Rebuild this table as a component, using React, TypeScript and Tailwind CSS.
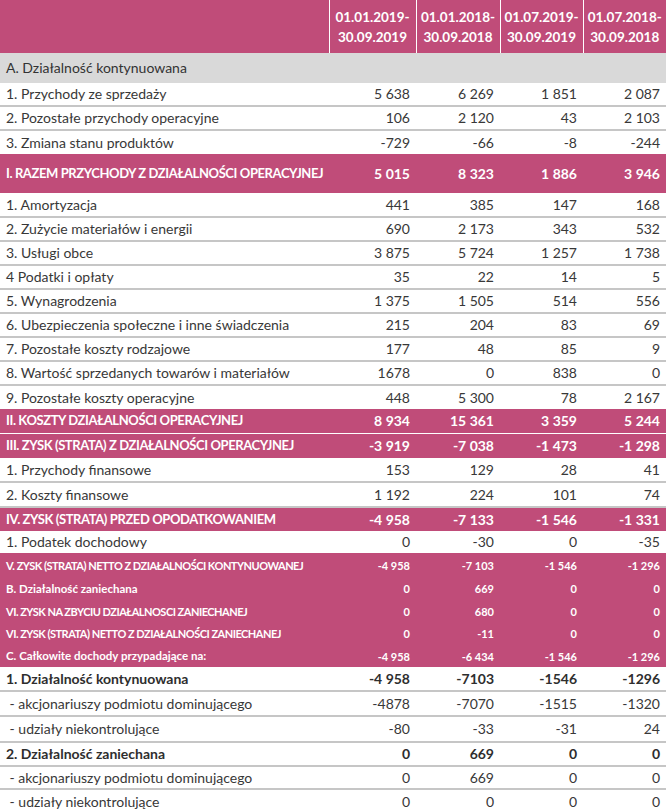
import React from 'react';

type Kind = 'section' | 'plain' | 'total' | 'small' | 'bold';

interface Row {
  label: string;
  vals: string[];
  kind: Kind;
  h: number;
  line?: boolean; // gray separator above
  white?: boolean; // thin white line above
  under?: boolean; // gray line under
}

const rows: Row[] = [
  { label: 'A. Działalność kontynuowana', vals: [], kind: 'section', h: 30 },
  { label: '1. Przychody ze sprzedaży', vals: ['5 638', '6 269', '1 851', '2 087'], kind: 'plain', h: 23 },
  { label: '2. Pozostałe przychody operacyjne', vals: ['106', '2 120', '43', '2 103'], kind: 'plain', h: 24, line: true },
  { label: '3. Zmiana stanu produktów', vals: ['-729', '-66', '-8', '-244'], kind: 'plain', h: 24, line: true },
  { label: 'I. RAZEM PRZYCHODY Z DZIAŁALNOŚCI OPERACYJNEJ', vals: ['5 015', '8 323', '1 886', '3 946'], kind: 'total', h: 39 },
  { label: '1. Amortyzacja', vals: ['441', '385', '147', '168'], kind: 'plain', h: 24 },
  { label: '2. Zużycie materiałów i energii', vals: ['690', '2 173', '343', '532'], kind: 'plain', h: 24, line: true },
  { label: '3. Usługi obce', vals: ['3 875', '5 724', '1 257', '1 738'], kind: 'plain', h: 24, line: true },
  { label: '4 Podatki i opłaty', vals: ['35', '22', '14', '5'], kind: 'plain', h: 24, line: true },
  { label: '5. Wynagrodzenia', vals: ['1 375', '1 505', '514', '556'], kind: 'plain', h: 24, line: true },
  { label: '6. Ubezpieczenia społeczne i inne świadczenia', vals: ['215', '204', '83', '69'], kind: 'plain', h: 24, line: true },
  { label: '7. Pozostałe koszty rodzajowe', vals: ['177', '48', '85', '9'], kind: 'plain', h: 24, line: true },
  { label: '8. Wartość sprzedanych towarów i materiałów', vals: ['1678', '0', '838', '0'], kind: 'plain', h: 24, line: true },
  { label: '9. Pozostałe koszty operacyjne', vals: ['448', '5 300', '78', '2 167'], kind: 'plain', h: 24, line: true },
  { label: 'II. KOSZTY DZIAŁALNOŚCI OPERACYJNEJ', vals: ['8 934', '15 361', '3 359', '5 244'], kind: 'total', h: 24 },
  { label: 'III. ZYSK (STRATA) Z DZIAŁALNOŚCI OPERACYJNEJ', vals: ['-3 919', '-7 038', '-1 473', '-1 298'], kind: 'total', h: 25, white: true },
  { label: '1. Przychody finansowe', vals: ['153', '129', '28', '41'], kind: 'plain', h: 24 },
  { label: '2. Koszty finansowe', vals: ['1 192', '224', '101', '74'], kind: 'plain', h: 25, line: true, under: true },
  { label: 'IV. ZYSK (STRATA) PRZED OPODATKOWANIEM', vals: ['-4 958', '-7 133', '-1 546', '-1 331'], kind: 'total', h: 24 },
  { label: '1. Podatek dochodowy', vals: ['0', '-30', '0', '-35'], kind: 'plain', h: 22 },
  { label: 'V. ZYSK (STRATA) NETTO Z DZIAŁALNOŚCI KONTYNUOWANEJ', vals: ['-4 958', '-7 103', '-1 546', '-1 296'], kind: 'small', h: 24 },
  { label: 'B. Działalność zaniechana', vals: ['0', '669', '0', '0'], kind: 'small', h: 23 },
  { label: 'VI. ZYSK NA ZBYCIU DZIAŁALNOSCI ZANIECHANEJ', vals: ['0', '680', '0', '0'], kind: 'small', h: 22 },
  { label: 'VI. ZYSK (STRATA) NETTO Z DZIAŁALNOŚCI ZANIECHANEJ', vals: ['0', '-11', '0', '0'], kind: 'small', h: 23 },
  { label: 'C. Całkowite dochody przypadające na:', vals: ['-4 958', '-6 434', '-1 546', '-1 296'], kind: 'small', h: 22 },
  { label: '1. Działalność kontynuowana', vals: ['-4 958', '-7103', '-1546', '-1296'], kind: 'bold', h: 24 },
  { label: ' - akcjonariuszy podmiotu dominującego', vals: ['-4878', '-7070', '-1515', '-1320'], kind: 'plain', h: 25, line: true },
  { label: ' - udziały niekontrolujące', vals: ['-80', '-33', '-31', '24'], kind: 'plain', h: 26, line: true },
  { label: '2. Działalność zaniechana', vals: ['0', '669', '0', '0'], kind: 'bold', h: 24, line: true },
  { label: ' - akcjonariuszy podmiotu dominującego', vals: ['0', '669', '0', '0'], kind: 'plain', h: 23, line: true },
  { label: ' - udziały niekontrolujące', vals: ['0', '0', '0', '0'], kind: 'plain', h: 25, line: true },
];

const headers = [
  ['01.01.2019-', '30.09.2019'],
  ['01.01.2018-', '30.09.2018'],
  ['01.07.2019-', '30.09.2019'],
  ['01.07.2018-', '30.09.2018'],
];

const rowStyle = (kind: Kind) => {
  if (kind === 'section') return 'bg-[#d9d9d9] text-[#333] text-[14px]';
  if (kind === 'total') return 'bg-[#c04c79] text-white text-[14px] font-bold';
  if (kind === 'small') return 'bg-[#c04c79] text-white text-[11px] font-bold';
  if (kind === 'bold') return 'bg-white text-[#2e2e2e] text-[14px] font-bold';
  return 'bg-white text-[#383838] text-[14px]';
};

// caps labels in pink rows are squeezed a bit, like the narrow original font
const labelStyle = (row: Row) => {
  const caps = row.label === row.label.toUpperCase();
  if (row.kind === 'total') return 'text-[13px] tracking-[-0.4px]';
  if (row.kind === 'small') return caps ? 'tracking-[-0.5px]' : 'text-[11.5px]';
  return '';
};

const App = () => {
  return (
    <div className="w-[666px] h-[811px] overflow-hidden bg-white font-['Lato',sans-serif]">
      <table className="w-[666px] table-fixed border-collapse">
        <colgroup>
          <col className="w-[329px]" />
          <col className="w-[87px]" />
          <col className="w-[84px]" />
          <col className="w-[83px]" />
          <col className="w-[83px]" />
        </colgroup>
        {/* ===== HEADER ===== */}
        <thead>
          <tr className="h-[53px] bg-[#c04c79]">
            <th />
            {headers.map((lines, idx) => (
              <th
                key={idx}
                className="border-l border-white px-1 text-center text-[13.5px] font-bold leading-[20px] text-white"
              >
                <div>{lines[0]}</div>
                <div>{lines[1]}</div>
              </th>
            ))}
          </tr>
        </thead>

        {/* ===== ROWS ===== */}
        <tbody>
          {rows.map((row, idx) => {
            const edge = row.line
              ? 'border-t-2 border-[#c6c6c6]'
              : row.white
              ? 'border-t border-white'
              : '';
            const under = row.under ? 'border-b-2 border-b-[#c6c6c6]' : '';
            return (
              <tr
                key={idx}
                style={{ height: row.h }}
                className={`${rowStyle(row.kind)} ${edge} ${under}`}
              >
                <td className={`whitespace-pre pl-[6px] leading-none ${labelStyle(row)}`}>{row.label}</td>
                {[0, 1, 2, 3].map((c) => (
                  <td key={c} className="pr-[6px] text-right leading-none">
                    {row.vals[c] ?? ''}
                  </td>
                ))}
              </tr>
            );
          })}
        </tbody>
      </table>
    </div>
  );
};

export default App;
